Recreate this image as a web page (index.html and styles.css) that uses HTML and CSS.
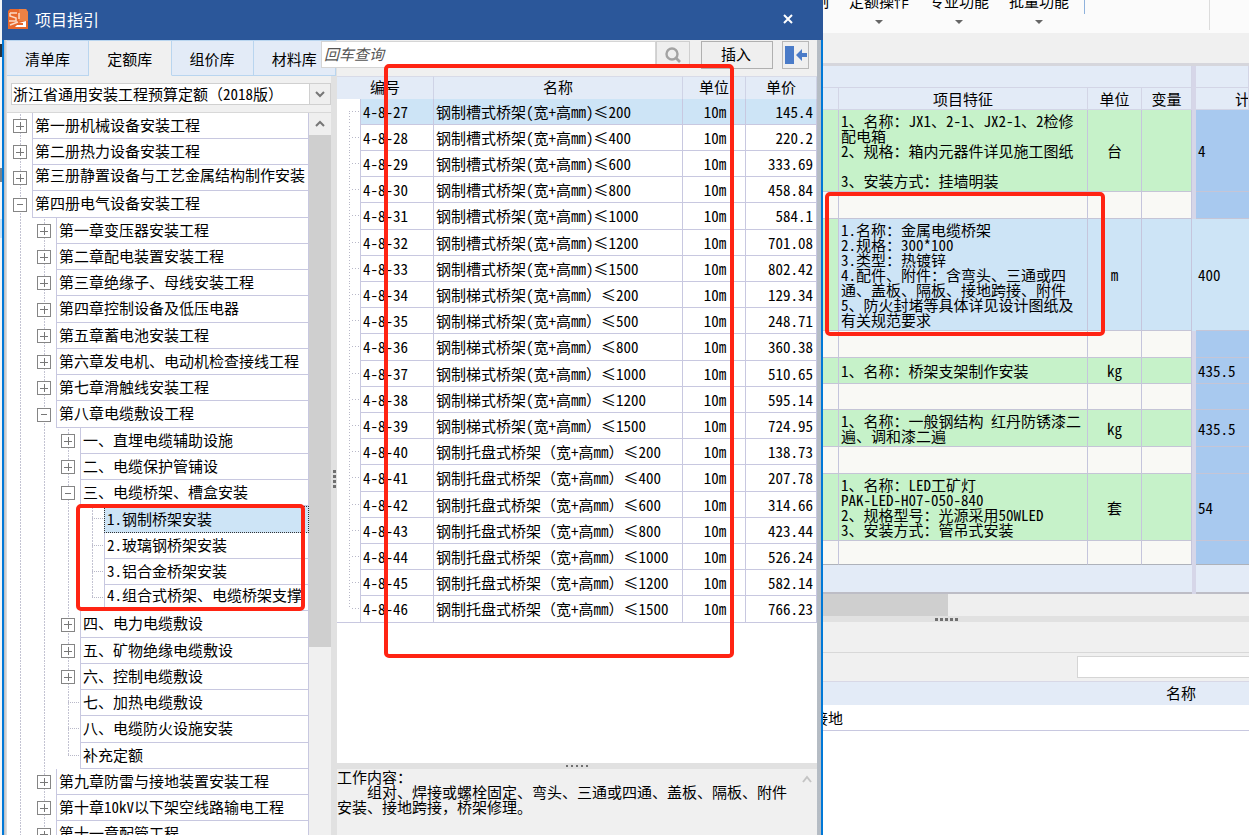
FILE: index.html
```html
<!DOCTYPE html>
<html lang="zh-CN">
<head>
<meta charset="utf-8">
<title>项目指引</title>
<link rel="stylesheet" href="styles.css">
</head>
<body>
<div class="desktop">
<div class="edge"></div>

<section class="dialog" aria-label="项目指引">
  <header class="titlebar">
    <svg class="logo" viewBox="0 0 20 20" aria-hidden="true"><path d="M2 0H18L20 3V20H0V2Z" fill="#e8682c"/><path d="M11 0H18L20 3V12H11Z" fill="#ee8244"/><path d="M2 4H9M2 4V7L8 9V12H1M11 4V10M2 16L10 13" fill="none" stroke="#fbd9c3" stroke-width="1.5"/><path d="M11 14L18 12V18H7L9 16H15V14Z" fill="#fff"/></svg>
    <h1>项目指引</h1>
    <button class="close" aria-label="关闭"><svg viewBox="0 0 10 10" width="10" height="10"><path d="M1 1L9 9M9 1L1 9" stroke="#fff" stroke-width="2"/></svg></button>
  </header>
  <div class="dialog-body">
    <div class="library">
      <nav class="tabs">
        <button>清单库</button><button class="active">定额库</button><button>组价库</button><button class="last-tab">材料库</button>
      </nav>
      <div class="combo">
        <select aria-label="定额库"><option>浙江省通用安装工程预算定额（2018版）</option></select>
        <span class="combo-arrow"><svg viewBox="0 0 10 8" width="10" height="8"><path d="M1 2L5 6L9 2" fill="none" stroke="#777" stroke-width="2"/></svg></span>
      </div>
      <div class="tree-wrap">
        <ul class="tree">
          <li class="l0"><span class="lead"><button class="tg plus" aria-label="展开"></button></span><span class="cell">第一册机械设备安装工程</span></li>
          <li class="l0"><span class="lead"><button class="tg plus" aria-label="展开"></button></span><span class="cell">第二册热力设备安装工程</span></li>
          <li class="l0"><span class="lead"><button class="tg plus" aria-label="展开"></button></span><span class="cell top">第三册静置设备与工艺金属结构制作安装</span></li>
          <li class="l0"><span class="lead"><button class="tg" aria-label="折叠"></button></span><span class="cell">第四册电气设备安装工程</span></li>
          <li class="l1"><span class="lead"><button class="tg plus" aria-label="展开"></button></span><span class="cell">第一章变压器安装工程</span></li>
          <li class="l1"><span class="lead"><button class="tg plus" aria-label="展开"></button></span><span class="cell">第二章配电装置安装工程</span></li>
          <li class="l1"><span class="lead"><button class="tg plus" aria-label="展开"></button></span><span class="cell">第三章绝缘子、母线安装工程</span></li>
          <li class="l1"><span class="lead"><button class="tg plus" aria-label="展开"></button></span><span class="cell">第四章控制设备及低压电器</span></li>
          <li class="l1"><span class="lead"><button class="tg plus" aria-label="展开"></button></span><span class="cell">第五章蓄电池安装工程</span></li>
          <li class="l1"><span class="lead"><button class="tg plus" aria-label="展开"></button></span><span class="cell">第六章发电机、电动机检查接线工程</span></li>
          <li class="l1"><span class="lead"><button class="tg plus" aria-label="展开"></button></span><span class="cell">第七章滑触线安装工程</span></li>
          <li class="l1"><span class="lead"><button class="tg" aria-label="折叠"></button></span><span class="cell">第八章电缆敷设工程</span></li>
          <li class="l2"><span class="lead"><button class="tg plus" aria-label="展开"></button></span><span class="cell">一、直埋电缆辅助设施</span></li>
          <li class="l2"><span class="lead"><button class="tg plus" aria-label="展开"></button></span><span class="cell">二、电缆保护管铺设</span></li>
          <li class="l2"><span class="lead"><button class="tg" aria-label="折叠"></button></span><span class="cell">三、电缆桥架、槽盒安装</span></li>
          <li class="l3"><span class="lead leaf"></span><span class="cell selected">1.钢制桥架安装</span></li>
          <li class="l3"><span class="lead leaf"></span><span class="cell">2.玻璃钢桥架安装</span></li>
          <li class="l3"><span class="lead leaf"></span><span class="cell">3.铝合金桥架安装</span></li>
          <li class="l3"><span class="lead leaf end"></span><span class="cell top">4.组合式桥架、电缆桥架支撑</span></li>
          <li class="l2"><span class="lead"><button class="tg plus" aria-label="展开"></button></span><span class="cell">四、电力电缆敷设</span></li>
          <li class="l2"><span class="lead"><button class="tg plus" aria-label="展开"></button></span><span class="cell">五、矿物绝缘电缆敷设</span></li>
          <li class="l2"><span class="lead"><button class="tg plus" aria-label="展开"></button></span><span class="cell">六、控制电缆敷设</span></li>
          <li class="l2"><span class="lead leaf"></span><span class="cell">七、加热电缆敷设</span></li>
          <li class="l2"><span class="lead leaf"></span><span class="cell">八、电缆防火设施安装</span></li>
          <li class="l2"><span class="lead leaf end"></span><span class="cell">补充定额</span></li>
          <li class="l1"><span class="lead"><button class="tg plus" aria-label="展开"></button></span><span class="cell">第九章防雷与接地装置安装工程</span></li>
          <li class="l1"><span class="lead"><button class="tg plus" aria-label="展开"></button></span><span class="cell">第十章10kV以下架空线路输电工程</span></li>
          <li class="l1"><span class="lead"><button class="tg plus" aria-label="展开"></button></span><span class="cell">第十一章配管工程</span></li>
        </ul>
        <div class="scrollbar">
          <button class="scroll-up" aria-label="向上滚动"><svg viewBox="0 0 10 8" width="10" height="8"><path d="M1 6L5 2L9 6" fill="none" stroke="#777" stroke-width="2"/></svg></button>
          <div class="thumb"></div>
        </div>
      </div>
    </div>
    <div class="splitter-v"><i></i><i></i><i></i><i></i></div>
    <div class="results">
      <div class="toolbar">
        <input class="search" type="text" placeholder="回车查询" aria-label="查询">
        <button class="search-btn" aria-label="搜索"><svg viewBox="0 0 18 18" width="18" height="18"><circle cx="8" cy="8" r="5.5" fill="none" stroke="#a3a3a3" stroke-width="2.4"/><path d="M12 12L16 16" stroke="#a3a3a3" stroke-width="2.6"/></svg></button>
        <button class="insert">插入</button>
        <button class="dock" aria-label="收起"><svg viewBox="0 0 22 18" width="22" height="18"><path d="M0 0H9V18H0Z" fill="#4a7bc8"/><path d="M11 9L17 3V7H22V11H17V15Z" fill="#4a7bc8"/></svg></button>
      </div>
      <div class="list">
        <table>
          <colgroup><col class="c-guide"><col class="c-code"><col><col class="c-unit"><col class="c-price"></colgroup>
          <thead><tr><th colspan="2">编号</th><th>名称</th><th>单位</th><th>单价</th></tr></thead>
          <tbody>
            <tr class="selected"><td></td><td>4-8-27</td><td>钢制槽式桥架(宽+高mm)≤200</td><td>10m</td><td>145.4</td></tr>
            <tr><td></td><td>4-8-28</td><td>钢制槽式桥架(宽+高mm)≤400</td><td>10m</td><td>220.2</td></tr>
            <tr><td></td><td>4-8-29</td><td>钢制槽式桥架(宽+高mm)≤600</td><td>10m</td><td>333.69</td></tr>
            <tr><td></td><td>4-8-30</td><td>钢制槽式桥架(宽+高mm)≤800</td><td>10m</td><td>458.84</td></tr>
            <tr><td></td><td>4-8-31</td><td>钢制槽式桥架(宽+高mm)≤1000</td><td>10m</td><td>584.1</td></tr>
            <tr><td></td><td>4-8-32</td><td>钢制槽式桥架(宽+高mm)≤1200</td><td>10m</td><td>701.08</td></tr>
            <tr><td></td><td>4-8-33</td><td>钢制槽式桥架(宽+高mm)≤1500</td><td>10m</td><td>802.42</td></tr>
            <tr><td></td><td>4-8-34</td><td>钢制梯式桥架(宽+高mm）≤200</td><td>10m</td><td>129.34</td></tr>
            <tr><td></td><td>4-8-35</td><td>钢制梯式桥架(宽+高mm）≤500</td><td>10m</td><td>248.71</td></tr>
            <tr><td></td><td>4-8-36</td><td>钢制梯式桥架(宽+高mm）≤800</td><td>10m</td><td>360.38</td></tr>
            <tr><td></td><td>4-8-37</td><td>钢制梯式桥架(宽+高mm）≤1000</td><td>10m</td><td>510.65</td></tr>
            <tr><td></td><td>4-8-38</td><td>钢制梯式桥架(宽+高mm）≤1200</td><td>10m</td><td>595.14</td></tr>
            <tr><td></td><td>4-8-39</td><td>钢制梯式桥架(宽+高mm）≤1500</td><td>10m</td><td>724.95</td></tr>
            <tr><td></td><td>4-8-40</td><td>钢制托盘式桥架（宽+高mm）≤200</td><td>10m</td><td>138.73</td></tr>
            <tr><td></td><td>4-8-41</td><td>钢制托盘式桥架（宽+高mm）≤400</td><td>10m</td><td>207.78</td></tr>
            <tr><td></td><td>4-8-42</td><td>钢制托盘式桥架（宽+高mm）≤600</td><td>10m</td><td>314.66</td></tr>
            <tr><td></td><td>4-8-43</td><td>钢制托盘式桥架（宽+高mm）≤800</td><td>10m</td><td>423.44</td></tr>
            <tr><td></td><td>4-8-44</td><td>钢制托盘式桥架（宽+高mm）≤1000</td><td>10m</td><td>526.24</td></tr>
            <tr><td></td><td>4-8-45</td><td>钢制托盘式桥架（宽+高mm）≤1200</td><td>10m</td><td>582.14</td></tr>
            <tr><td></td><td>4-8-46</td><td>钢制托盘式桥架（宽+高mm）≤1500</td><td>10m</td><td>766.23</td></tr>
          </tbody>
        </table>
      </div>
      <div class="splitter-h"><i></i><i></i><i></i><i></i><i></i></div>
      <div class="note">
        <p>工作内容：<br>&emsp;&emsp;组对、焊接或螺栓固定、弯头、三通或四通、盖板、隔板、附件<br>安装、接地跨接，桥架修理。</p>
        <svg viewBox="0 0 10 8" width="10" height="8"><path d="M1 7L5 2L9 7" fill="none" stroke="#c4c4c4" stroke-width="2"/></svg>
      </div>
    </div>
  </div>
</section>

<main class="app">
  <div class="ribbon">
    <span class="cut">制</span>
    <button>定额操作<b></b></button><button>专业功能<b></b></button><button>批量功能<b></b></button>
    <span class="rule-blue"></span><span class="rule-gray"></span>
  </div>
  <div class="band"></div>
  <table class="bill">
    <colgroup><col class="b-gutter"><col><col class="b-unit"><col class="b-var"><col class="b-gap"><col class="b-qty"></colgroup>
    <thead>
      <tr><th colspan="4"></th><th class="gap"></th><th></th></tr>
      <tr><th></th><th>项目特征</th><th>单位</th><th>变量</th><th class="gap"></th><th class="calc">计</th></tr>
    </thead>
    <tbody>
      <tr class="item"><td></td><td>1、名称：JX1、2-1、JX2-1、2检修<br>配电箱<br>2、规格：箱内元器件详见施工图纸<br><br>3、安装方式：挂墙明装</td><td>台</td><td></td><td class="gap"></td><td>4</td></tr>
      <tr class="tall"><td></td><td></td><td></td><td></td><td class="gap"></td><td></td></tr>
      <tr class="item current"><td></td><td>1.名称：金属电缆桥架<br>2.规格：300*100<br>3.类型：热镀锌<br>4.配件、附件：含弯头、三通或四<br>通、盖板、隔板、接地跨接、附件<br>5、防火封堵等具体详见设计图纸及<br>有关规范要求</td><td>m</td><td></td><td class="gap"></td><td>400</td></tr>
      <tr class="tall"><td></td><td></td><td></td><td></td><td class="gap"></td><td></td></tr>
      <tr class="item"><td></td><td>1、名称：桥架支架制作安装</td><td>kg</td><td></td><td class="gap"></td><td>435.5</td></tr>
      <tr><td></td><td></td><td></td><td></td><td class="gap"></td><td></td></tr>
      <tr class="item"><td></td><td>1、名称：一般钢结构 红丹防锈漆二<br>遍、调和漆二遍</td><td>kg</td><td></td><td class="gap"></td><td>435.5</td></tr>
      <tr class="tall"><td></td><td></td><td></td><td></td><td class="gap"></td><td></td></tr>
      <tr class="item"><td></td><td>1、名称：LED工矿灯<br>PAK-LED-H07-050-840<br>2、规格型号：光源采用50WLED<br>3、安装方式：管吊式安装</td><td>套</td><td></td><td class="gap"></td><td>54</td></tr>
      <tr class="short"><td></td><td></td><td></td><td></td><td class="gap"></td><td></td></tr>
    </tbody>
    <tfoot><tr><td colspan="4"></td><td class="gap"></td><td></td></tr></tfoot>
  </table>
  <div class="hscroll"><div></div></div>
  <div class="splitter-h app-split"><i></i><i></i><i></i><i></i><i></i></div>
  <div class="panel"></div>
  <div class="filter"><input type="text" aria-label="筛选"></div>
  <div class="sub-head">名称</div>
  <div class="sub-row"><span>接地</span></div>
</main>
</div>
<div class="mark mark-list"></div>
<div class="mark mark-tree"></div>
<div class="mark mark-item"></div>
</body>
</html>
```
FILE: styles.css
```css
* { box-sizing: border-box; }
body {
  margin: 0;
  height: 100vh;
  overflow: hidden;
  background: #fff;
  color: #000;
  font: 15px/15px "Noto Sans Mono CJK SC", "Noto Sans CJK SC", sans-serif;
}
button, input, select { font: inherit; color: inherit; margin: 0; padding: 0; border: 0; border-radius: 0; }
ul, p, h1 { margin: 0; padding: 0; }
ul { list-style: none; }
table { border-collapse: separate; border-spacing: 0; table-layout: fixed; width: 100%; }
th { font-weight: 400; }
td, th { padding: 0; white-space: nowrap; overflow: hidden; }
svg { display: block; }

.desktop { display: flex; height: 100vh; }
.edge { width: 2px; background: linear-gradient(#f4f6f8 44px, #26323c 44px, #26323c 57px, #f4f6f8 57px, #f4f6f8 168px, #77828c 168px, #77828c 182px, #f4f6f8 182px, #f4f6f8 219px, #cde4f6 219px, #cde4f6 238px, #f4f6f8 238px); }

/* dialog */
.dialog { flex: 821 1 0; min-width: 0; display: flex; flex-direction: column; }
.titlebar { height: 40px; flex: none; display: flex; align-items: center; gap: 7px; padding: 0 30px 2px 6px; background: #2b579a; color: #fff; }
.logo { width: 20px; height: 20px; }
.titlebar h1 { flex: 1; font: 400 16px/20px "Noto Sans CJK SC", sans-serif; }
.close { background: none; }
.dialog-body { flex: 1; min-height: 0; display: flex; border-left: 2px solid #0078d7; border-right: 2px solid #0078d7; background: linear-gradient(90deg, #b5bcc4, #e4e4e4 3px, #e4e4e4 50%, #b5bcc4 100%); padding: 0 4px 0 3px; }
.library { flex: 324 1 0; min-width: 0; display: flex; flex-direction: column; background: #f0f0f0; }
.tabs { display: flex; height: 36px; flex: none; margin-right: -5px; position: relative; font-family: "Noto Sans CJK SC", sans-serif; }
.tabs button { flex: 1; background: #e3ebf7; border: solid #b9d5ef; border-width: 1px 1px 1px 0; }
.tabs .active { background: #f0f0f0; border-bottom-color: #f0f0f0; }
.combo { display: flex; height: 22px; flex: none; margin: 7px 0 7px 4px; border: 1px solid #d0d0d0; background: #fff; }
.combo select { flex: 1; min-width: 0; appearance: none; background: #fff; padding-left: 1px; line-height: 20px; }
.combo-arrow { width: 21px; display: grid; place-items: center; background: #efefef; border-left: 1px solid #d0d0d0; }

.tree-wrap { flex: 1; min-height: 0; display: flex; background: #fff; border-top: 1px solid #d8d8d8; }
.tree { flex: 1; min-width: 0; overflow: hidden; padding-left: 1px; }
.tree li { display: flex; height: 26px; }
.tree li:nth-child(4n) { height: 27px; }
.lead {
  flex: none; position: relative; display: flex; align-items: center; justify-content: flex-end; padding-right: 5px;
  background: repeating-linear-gradient(#fff 0 1px, transparent 1px 3px), repeating-linear-gradient(90deg, transparent 0 12px, #c3c3d2 12px 13px, transparent 13px 24px);
}
.l0 .lead { width: 24px; }
.l1 .lead { width: 48px; }
.l2 .lead { width: 72px; }
.l3 .lead { width: 96px; }
.leaf::after { content: ""; position: absolute; right: 1px; top: 12px; width: 11px; border-top: 1px dotted #b8b8c8; }
.end::before { content: ""; position: absolute; right: 0; top: 13px; bottom: 0; width: 13px; background: #fff; }
.tg {
  width: 14px; height: 14px; border: 1px solid #858585;
  background: linear-gradient(#777, #777) center / 6px 1px no-repeat, #fff;
}
.tg.plus { background: linear-gradient(#777, #777) center / 8px 1px no-repeat, linear-gradient(#777, #777) center / 1px 8px no-repeat, #fff; }
.cell { flex: 1; min-width: 0; overflow: hidden; white-space: nowrap; padding-left: 2px; border: solid #c8c8e0; border-width: 0 1px 1px; line-height: 24px; }
.cell.top { line-height: 20px; }
.cell.selected { background: #cde4f6; border: 1px dotted #333; line-height: 23px; }
.scrollbar { width: 22px; background: #f0f0f0; }
.scroll-up { display: grid; place-items: center; width: 100%; height: 22px; background: #efefef; }
.thumb { height: 512px; background: #cfcfcf; }

.splitter-v { width: 6px; display: flex; flex-direction: column; align-items: center; justify-content: center; gap: 3px; padding-top: 82px; background: #e1e1e1; }
.splitter-v i, .splitter-h i { width: 2px; height: 2px; background: #707070; }
.splitter-v i, .app-split i { width: 3px; height: 3px; }
.splitter-h { height: 6px; flex: none; display: flex; align-items: center; justify-content: center; gap: 3px; background: #e1e1e1; }
.splitter-v, .app-split { gap: 2px; }

/* results */
.results { flex: 480 1 0; min-width: 0; display: flex; flex-direction: column; background: #f0f0f0; }
.toolbar { display: flex; height: 36px; flex: none; align-items: flex-start; padding: 1px 8px 0 0; margin-left: -16px; position: relative; }
.search { flex: 1; min-width: 0; height: 27px; padding: 0 2px 3px; background: #fff; border: 1px solid #d5d5d5; }
.search::placeholder { color: #555; font-style: italic; opacity: 1; }
.search-btn { width: 34px; height: 27px; display: grid; place-items: center; background: #efefef; border: 1px solid #cfcfcf; }
.insert { width: 72px; height: 28px; margin: 0 9px 0 11px; padding: 0 2px 4px 0; background: #efefef; border: 1px solid #b0b0b0; font-family: "Noto Sans CJK SC", sans-serif; }
.dock { width: 27px; height: 28px; display: grid; place-items: center; background: #efefef; border: 1px solid #b8b8b8; }
.list { flex: 1; min-height: 0; overflow: hidden; background: #fff; }
.c-guide { width: 24px; }
.c-code { width: 73px; }
.c-unit { width: 63px; }
.c-price { width: 71px; }
.list th { height: 23px; padding-bottom: 3px; background: #e3ebf7; border-right: 1px solid #cfd3e6; border-top: 1px solid #d8dbe8; }
.list td { height: 26px; border-right: 1px solid #c8c8e0; border-bottom: 1px solid #c8c8e0; padding: 0 0 1px 2px; }
.list tr:nth-child(5n) td { height: 27px; }
.list td:first-child { border-bottom: 0; background: repeating-linear-gradient(#fff 0 1px, #b8b8c8 1px 2px, #fff 2px 3px) 12px 0 / 1px 100% no-repeat, repeating-linear-gradient(90deg, #b8b8c8 0 1px, #fff 1px 3px) 12px 12px / 11px 1px no-repeat; }
.list tr:first-child td:first-child { background-position: 12px 13px, 12px 12px; }
.list tr:last-child td:first-child { border-bottom: 1px solid #c8c8e0; background-size: 1px 13px, 11px 1px; }
.list td:nth-child(4) { text-align: center; }
.list td:nth-child(5) { text-align: right; padding-right: 3px; }
.list .selected td:not(:first-child) { background: #cde4f6; }
.note { height: 66px; flex: none; display: flex; justify-content: space-between; padding: 0 5px 0 0; white-space: nowrap; }
.note svg { margin-top: 6px; }

/* background application */
.app { flex: 426 1 0; min-width: 0; overflow: hidden; display: flex; flex-direction: column; }
.ribbon { height: 33px; flex: none; display: flex; align-items: flex-start; overflow: hidden; background: #fbfbfb; font-family: "Noto Sans CJK SC", sans-serif; }
.ribbon button { width: 80px; flex: none; margin-top: -7px; background: none; white-space: nowrap; display: flex; flex-direction: column; align-items: center; gap: 12px; }
.ribbon b { border: solid transparent; border-width: 4px 4px 0; border-top-color: #666; }
.cut { width: 16px; direction: rtl; flex: none; margin: -7px 0 0; white-space: nowrap; text-indent: 10px; }
.rule-blue { width: 1px; height: 14px; margin-left: 5px; background: #8fb2dc; }
.rule-gray { width: 1px; height: 30px; margin: 0 39px 0 auto; background: #dcdcdc; }
.band { height: 33px; flex: none; background: #f0f0f0; border-bottom: 3px solid #d6d6dc; }
.b-gutter { width: 16px; }
.b-unit { width: 54px; }
.b-var { width: 50px; }
.b-gap { width: 4px; }
.b-qty { width: 53px; }
.bill { flex: none; }
.bill th { height: 22px; background: #e3ebf7; border-right: 1px solid #d3d5e6; border-bottom: 1px solid #d3d5e6; }
.bill .calc { text-align: left; padding-left: 39px; }
.bill td { height: 26px; background: #f9f9f5; border-right: 1px solid #c5c5dc; border-bottom: 1px solid #c5c5d6; }
.bill td:nth-child(2) { padding: 3px 0 3px 2px; line-height: 15px; }
.bill td:nth-child(3) { text-align: center; }
.bill td:nth-child(6) { background: #a8c9ef; padding-left: 2px; border-right: 0; }
.bill .item td { background: #c6f2c9; }
.bill .item td:nth-child(6) { background: #a8c9ef; }
.bill .current td:nth-child(n+2), .bill .current td:nth-child(6) { background: #cde4f6; }
.bill .tall td { height: 27px; }
.bill .short td { height: 24px; border-bottom-color: #aeb2ba; }
.bill .gap, .bill .item .gap { background: #d6d6e8; border-right: 0; border-bottom: 0; }
.bill tfoot td, .bill tfoot td:nth-child(3) { height: 29px; background: #e3ebf7; border-right: 0; border-bottom: 2px solid #bdbdc6; }
.bill tfoot .gap { background: #d6d6e8; }
.hscroll { height: 22px; flex: none; background: #efefef; }
.hscroll div { width: 125px; height: 22px; background: #cfcfcf; }
.app-split { justify-content: flex-start; padding-left: 112px; }
.panel { height: 31px; flex: none; background: #f0f0f0; border-bottom: 1px solid #d8d8d8; }
.filter { height: 29px; flex: none; display: flex; background: #f0f0f0; padding-top: 3px; border-bottom: 1px solid #d8d8e6; }
.filter input { flex: 1; min-width: 0; margin-left: 254px; height: 22px; border: solid #d5d5d5; border-width: 1px 0 1px 1px; background: #fff; }
.sub-head { height: 23px; flex: none; line-height: 22px; padding-left: 343px; background: #e3ebf7; white-space: nowrap; }
.sub-row { height: 26px; flex: none; line-height: 25px; border-bottom: 1px solid #c8c8e0; }
.sub-row span { margin-left: -10px; }

/* red annotations */
.mark { position: absolute; border: 4px solid #ff2413; border-radius: 5px; pointer-events: none; }
.mark-list { left: 384px; top: 64px; width: 350px; height: 594px; }
.mark-tree { left: 76px; top: 504px; width: 229px; height: 107px; }
.mark-item { left: 825px; top: 192px; width: 280px; height: 144px; }
```
